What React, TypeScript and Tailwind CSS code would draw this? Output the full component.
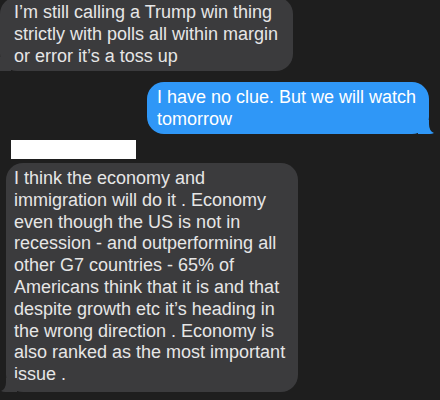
import React from "react";

const font = { fontFamily: '"Liberation Sans", Arial, sans-serif' };

function LeftTail({ color }: { color: string }) {
  return (
    <svg className="absolute bottom-0 left-[-5px]" width="16" height="14" viewBox="0 0 16 14">
      <path d="M16 0 L16 14 L4 14 Q2 14 0 13 Q5 11 5 4 L5 0 Z" fill={color} />
    </svg>
  );
}

function RightTail({ color }: { color: string }) {
  return (
    <svg className="absolute bottom-0 right-[-5px]" width="16" height="14" viewBox="0 0 16 14">
      <path d="M0 0 L0 14 L12 14 Q14 14 16 13 Q11 11 11 4 L11 0 Z" fill={color} />
    </svg>
  );
}

export default function App() {
  return (
    <div className="w-[440px] h-[400px] overflow-hidden bg-[#1e1e1e]" style={font}>
      <div className="flex flex-col">
        <div className="relative mt-[-3px] ml-[0px] w-[293px] rounded-[17px] bg-[#3b3b3d] pl-[14px] pr-2 pt-[4px] pb-[4px] text-[18px] leading-[22px] text-[#e6e6e6]">
          <div>I’m still calling a Trump win thing</div>
          <div>strictly with polls all within margin</div>
          <div>or error it’s a toss up</div>
          <LeftTail color="#3b3b3d" />
        </div>
        <div className="flex justify-end mt-[11px] pr-[11px]">
          <div className="relative w-[282px] rounded-[17px] bg-[#2f97f7] pl-[10px] pr-2 pt-[4px] pb-[4px] text-[18px] leading-[22px] text-white">
            <div>I have no clue. But we will watch</div>
            <div>tomorrow</div>
            <RightTail color="#2f97f7" />
          </div>
        </div>
        <div className="mt-[6px] ml-[11px] w-[125px] h-[19px] bg-white" />
        <div className="relative mt-[4px] ml-[6px] w-[292px] rounded-[17px] bg-[#3b3b3d] pl-[8px] pr-2 pt-[5px] pb-[6px] text-[18px] leading-[21.8px] text-[#e6e6e6]">
          <div>I think the economy and</div>
          <div>immigration will do it . Economy</div>
          <div>even though the US is not in</div>
          <div>recession - and outperforming all</div>
          <div>other G7 countries - 65% of</div>
          <div>Americans think that it is and that</div>
          <div>despite growth etc it’s heading in</div>
          <div>the wrong direction . Economy is</div>
          <div>also ranked as the most important</div>
          <div>issue .</div>
          <LeftTail color="#3b3b3d" />
        </div>
      </div>
    </div>
  );
}
